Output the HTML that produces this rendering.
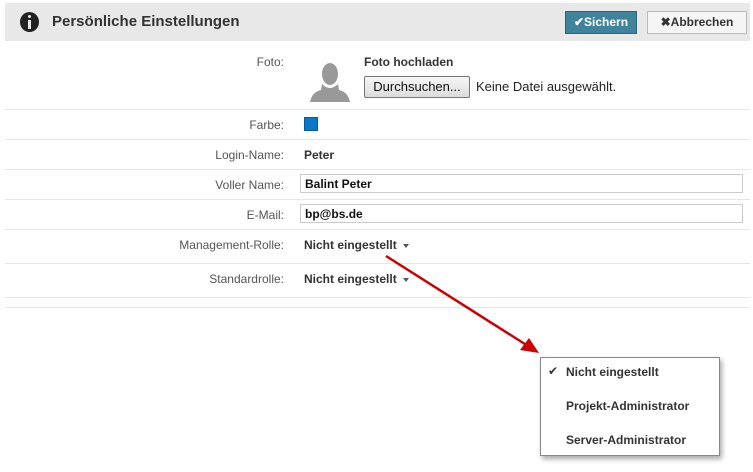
<!DOCTYPE html>
<html><head><meta charset="utf-8"><style>
body{margin:0;width:753px;height:472px;background:#fff;font-family:"Liberation Sans",sans-serif;position:relative;overflow:hidden;color:#333}
.a{position:absolute}
.hd{left:5px;top:3px;width:745px;height:38px;background:#e8e8e8}
.line{left:5px;width:745px;height:1px;background:#e6e6e6}
.lbl{right:469px;font-size:12px;color:#555;text-align:right}
.val{left:304px;font-size:12px;font-weight:bold;color:#333}
.inp{left:300px;width:443px;height:19px;border:1px solid #ccc;font-size:12px;font-weight:bold;line-height:19px;padding-left:4px;box-sizing:border-box;color:#111}
.car{display:inline-block;width:0;height:0;border-left:3.5px solid transparent;border-right:3.5px solid transparent;border-top:4px solid #555;margin-left:6px;vertical-align:middle}
.dd{left:540px;top:357px;width:178px;height:97px;border:1px solid #888;background:#fff;box-shadow:2px 3px 5px rgba(0,0,0,.35)}
.it{left:566px;font-size:12px;font-weight:bold;color:#333}
</style></head><body>
<div class="a hd"></div>
<div class="a" style="left:20px;top:12px;width:19px;height:20px;border-radius:50%;background:#222"></div>
<div class="a" style="left:28px;top:15px;width:3px;height:3px;background:#e8e8e8;border-radius:50%"></div>
<div class="a" style="left:28px;top:20px;width:3px;height:9px;background:#e8e8e8"></div>
<div class="a" style="left:52px;top:13px;font-size:15px;font-weight:bold;color:#333">Persönliche Einstellungen</div>
<div class="a" style="left:565px;top:11px;width:70px;height:21px;background:#3f839c;border:1px solid #2c6478;color:#fff;font-size:12px;font-weight:bold;line-height:21px;text-align:center">✔Sichern</div>
<div class="a" style="left:647px;top:11px;width:98px;height:21px;background:#f5f5f5;border:1px solid #bbb;color:#333;font-size:12px;font-weight:bold;line-height:21px;text-align:center">✖Abbrechen</div>

<div class="a lbl" style="top:55px">Foto:</div>
<svg class="a" style="left:308px;top:60px" width="44" height="44" viewBox="0 0 44 44"><ellipse cx="22" cy="14" rx="8" ry="11" fill="#999"/><path d="M14 24 Q22 32 30 24 L31 30 Q40 32 42 42 L2 42 Q4 32 13 30 Z" fill="#999"/></svg>
<div class="a val" style="left:364px;top:55px">Foto hochladen</div>
<div class="a" style="left:364px;top:76px;width:104px;height:20px;border:1px solid #777;border-radius:2px;background:linear-gradient(#f6f6f6,#dcdcdc);font-size:13px;line-height:20px;text-align:center;color:#111">Durchsuchen...</div>
<div class="a" style="left:476px;top:79px;font-size:13px;color:#222">Keine Datei ausgewählt.</div>

<div class="a line" style="top:109px"></div>
<div class="a lbl" style="top:118px">Farbe:</div>
<div class="a" style="left:304px;top:117px;width:14px;height:14px;background:#0a78c8;border:1px solid #0a5a99;box-sizing:border-box"></div>
<div class="a line" style="top:139px"></div>
<div class="a lbl" style="top:148px">Login-Name:</div>
<div class="a val" style="top:148px">Peter</div>
<div class="a line" style="top:169px"></div>
<div class="a lbl" style="top:178px">Voller Name:</div>
<div class="a inp" style="top:174px">Balint Peter</div>
<div class="a line" style="top:199px"></div>
<div class="a lbl" style="top:208px">E-Mail:</div>
<div class="a inp" style="top:204px">bp@bs.de</div>
<div class="a line" style="top:229px"></div>
<div class="a lbl" style="top:238px">Management-Rolle:</div>
<div class="a val" style="top:238px">Nicht eingestellt<span class="car"></span></div>
<div class="a line" style="top:263px"></div>
<div class="a lbl" style="top:272px">Standardrolle:</div>
<div class="a val" style="top:272px">Nicht eingestellt<span class="car"></span></div>
<div class="a line" style="top:297px"></div>
<div class="a line" style="top:307px"></div>

<svg class="a" style="left:0;top:0" width="753" height="472"><line x1="386" y1="256" x2="528" y2="346" stroke="#c00" stroke-width="2.5"/><polygon points="539,353 520,350 529,338" fill="#c00"/></svg>

<div class="a dd"></div>
<div class="a" style="left:548px;top:364px;font-size:12px;color:#333">✔</div>
<div class="a it" style="top:365px">Nicht eingestellt</div>
<div class="a it" style="top:399px">Projekt-Administrator</div>
<div class="a it" style="top:433px">Server-Administrator</div>
</body></html>
